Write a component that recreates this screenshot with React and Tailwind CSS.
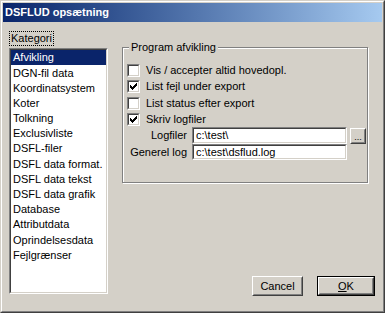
import React from "react";

const FONT = { fontFamily: '"Liberation Sans", Arial, sans-serif' };

function Sunken({ className = "", children }) {
  return (
    <div className={"border border-t-[#808080] border-l-[#808080] border-b-white border-r-white " + className}>
      <div className="w-full h-full border border-t-[#404040] border-l-[#404040] border-b-[#d4d0c8] border-r-[#d4d0c8] bg-white">
        {children}
      </div>
    </div>
  );
}

function Raised({ className = "", children }) {
  return (
    <div className={"border border-t-white border-l-white border-b-[#404040] border-r-[#404040] bg-[#d4d0c8] " + className}>
      <div className="w-full h-full border border-t-[#d4d0c8] border-l-[#d4d0c8] border-b-[#808080] border-r-[#808080] flex items-center justify-center">
        {children}
      </div>
    </div>
  );
}

function CheckBox({ checked }) {
  return (
    <Sunken className="w-[13px] h-[13px] shrink-0">
      {checked && (
        <svg width="9" height="9" viewBox="0 0 9 9" shapeRendering="crispEdges">
          <rect x="1" y="3" width="1" height="3" fill="#000" />
          <rect x="2" y="4" width="1" height="3" fill="#000" />
          <rect x="3" y="5" width="1" height="3" fill="#000" />
          <rect x="4" y="4" width="1" height="3" fill="#000" />
          <rect x="5" y="3" width="1" height="3" fill="#000" />
          <rect x="6" y="2" width="1" height="3" fill="#000" />
          <rect x="7" y="1" width="1" height="3" fill="#000" />
        </svg>
      )}
    </Sunken>
  );
}

const items = [
  "Afvikling",
  "DGN-fil data",
  "Koordinatsystem",
  "Koter",
  "Tolkning",
  "Exclusivliste",
  "DSFL-filer",
  "DSFL data format.",
  "DSFL data tekst",
  "DSFL data grafik",
  "Database",
  "Attributdata",
  "Oprindelsesdata",
  "Fejlgrænser",
];

const checks = [
  ["Vis / accepter altid hovedopl.", false, ""],
  ["List fejl under export", true, ""],
  ["List status efter export", false, "mt-[1px]"],
  ["Skriv logfiler", true, ""],
];

export default function App() {
  return (
    <div
      className="w-[385px] h-[313px] bg-[#d4d0c8] text-[11px] text-black border border-t-[#d4d0c8] border-l-[#d4d0c8] border-b-[#404040] border-r-[#404040]"
      style={FONT}
    >
      <div className="w-full h-full border border-t-white border-l-white border-b-[#808080] border-r-[#808080] p-px flex flex-col">
        <div className="h-[19px] shrink-0 bg-gradient-to-r from-[#0a246a] to-[#a6caf0] flex items-center pl-[2px] text-white font-bold text-[11px]">
          DSFLUD opsætning
        </div>
        <div className="flex flex-1 pl-[6px]">
          <div className="w-[99px] flex flex-col items-start pt-[9px]">
            <div className="h-[15px] border border-dotted border-black flex items-center px-[1px] leading-none">
              Kategori
            </div>
            <Sunken className="mt-[2px] w-[99px] h-[246px]">
              <div className="flex flex-col">
                {items.map((t, i) => (
                  <div
                    key={t}
                    className={
                      "h-[15.2px] flex items-center px-[2px] whitespace-nowrap " +
                      (i === 0 ? "bg-[#0a246a] text-white" : "")
                    }
                  >
                    {t}
                  </div>
                ))}
              </div>
            </Sunken>
          </div>
          <div className="ml-[14px] w-[253px] flex flex-col pt-[25px]">
            <div className="relative w-[246px] h-[136px] border border-[#808080] shadow-[inset_1px_1px_0_#fff,1px_1px_0_#fff] pl-[4px] pt-[14px]">
              <div className="absolute left-[6px] top-[-7px] px-[2px] bg-[#d4d0c8] leading-[13px]">
                Program afvikling
              </div>
              {checks.map(([label, c, extra]) => (
                <div key={label} className={"h-[16px] flex items-center " + extra}>
                  <CheckBox checked={c} />
                  <span className="ml-[6px] whitespace-nowrap">{label}</span>
                </div>
              ))}
              <div className="flex items-center h-[17px]">
                <div className="w-[60px] text-right whitespace-nowrap">Logfiler</div>
                <Sunken className="ml-[5px] w-[155px] h-[17px]">
                  <div className="h-full flex items-center pl-[2px] leading-none">c:\test\</div>
                </Sunken>
                <Raised className="ml-[3px] w-[16px] h-[16px]">
                  <span className="text-[9px] leading-none mt-[4px]">...</span>
                </Raised>
              </div>
              <div className="flex items-center h-[16px]">
                <div className="w-[60px] text-right whitespace-nowrap">Generel log</div>
                <Sunken className="ml-[5px] w-[155px] h-[16px]">
                  <div className="h-full flex items-center pl-[2px] leading-none">c:\test\dsflud.log</div>
                </Sunken>
              </div>
            </div>
            <div className="mt-[93px] flex justify-end">
              <Raised className="w-[51px] h-[20px]">Cancel</Raised>
              <div className="ml-[14px] w-[58px] h-[20px] border border-black">
                <Raised className="w-full h-full">
                  <span>
                    <span className="underline">O</span>K
                  </span>
                </Raised>
              </div>
            </div>
          </div>
        </div>
      </div>
    </div>
  );
}
